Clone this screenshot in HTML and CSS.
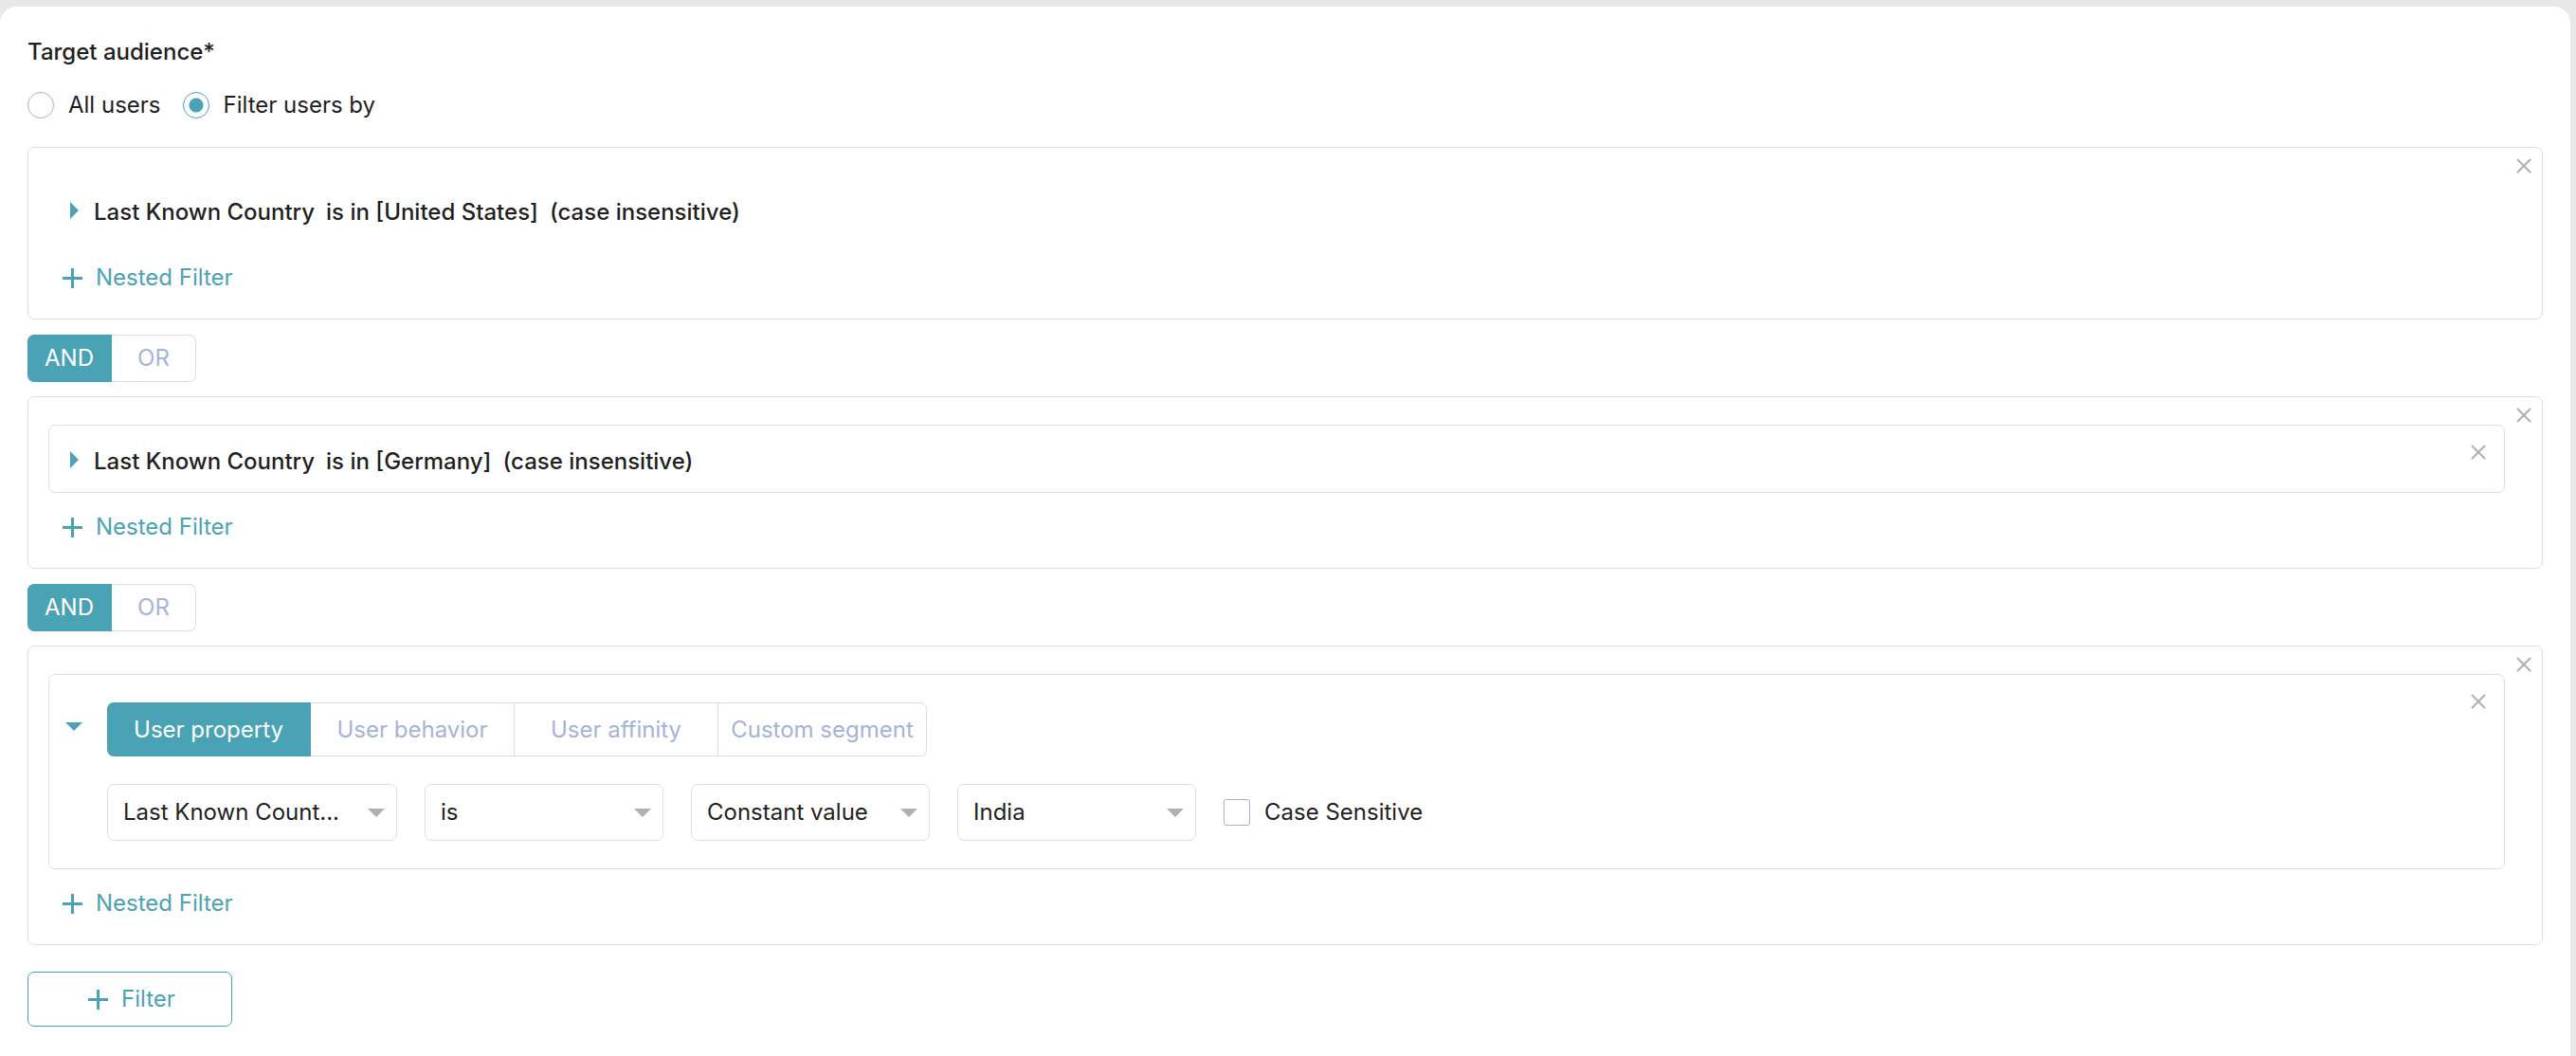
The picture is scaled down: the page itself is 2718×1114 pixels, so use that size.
FILE: index.html
```html
<!DOCTYPE html>
<html lang="en">
<head>
<meta charset="utf-8">
<title>Target audience</title>
<link rel="stylesheet" href="styles.css">
</head>
<body>
<svg class="sprite" aria-hidden="true">
  <symbol id="plus" viewBox="0 0 21 21"><path d="M10.5 0V21M0 10.5H21" stroke="currentColor" stroke-width="3"/></symbol>
  <symbol id="cross" viewBox="0 0 16 16"><path d="M1.5 1.5L14.5 14.5M14.5 1.5L1.5 14.5" stroke="currentColor" stroke-width="2" stroke-linecap="round"/></symbol>
  <symbol id="caret-right" viewBox="0 0 9 18"><path d="M0 0L9 9L0 18Z" fill="currentColor"/></symbol>
  <symbol id="caret-down" viewBox="0 0 18 9"><path d="M0 0H18L9 9Z" fill="currentColor"/></symbol>
</svg>
<main class="card">
  <h1 class="title">Target audience*</h1>
  <div class="radios">
    <label class="choice"><input class="radio" type="radio" name="audience"><span>All users</span></label>
    <label class="choice"><input class="radio" type="radio" name="audience" checked><span>Filter users by</span></label>
  </div>

  <section class="group">
    <div class="group-body">
      <div class="rule rule-plain">
        <button class="summary" type="button">
          <svg class="caret-right"><use href="#caret-right"/></svg>
          <span>Last Known Country</span><span>is in [United States]</span><span>(case insensitive)</span>
        </button>
      </div>
      <button class="nested" type="button"><svg class="plus"><use href="#plus"/></svg>Nested Filter</button>
    </div>
    <button class="close" type="button" aria-label="Remove group"><svg class="cross"><use href="#cross"/></svg></button>
  </section>

  <div class="toggle">
    <button class="segment selected" type="button">AND</button>
    <button class="segment" type="button">OR</button>
  </div>

  <section class="group">
    <div class="group-body">
      <div class="rule">
        <button class="summary" type="button">
          <svg class="caret-right"><use href="#caret-right"/></svg>
          <span>Last Known Country</span><span>is in [Germany]</span><span>(case insensitive)</span>
        </button>
        <button class="close close-rule" type="button" aria-label="Remove filter"><svg class="cross"><use href="#cross"/></svg></button>
      </div>
      <button class="nested" type="button"><svg class="plus"><use href="#plus"/></svg>Nested Filter</button>
    </div>
    <button class="close" type="button" aria-label="Remove group"><svg class="cross"><use href="#cross"/></svg></button>
  </section>

  <div class="toggle">
    <button class="segment selected" type="button">AND</button>
    <button class="segment" type="button">OR</button>
  </div>

  <section class="group">
    <div class="group-body">
      <div class="rule">
        <button class="collapse" type="button" aria-label="Collapse filter"><svg class="caret-down"><use href="#caret-down"/></svg></button>
        <div class="editor">
          <div class="tabs">
            <button class="segment selected" type="button">User property</button>
            <button class="segment" type="button">User behavior</button>
            <button class="segment" type="button">User affinity</button>
            <button class="segment" type="button">Custom segment</button>
          </div>
          <div class="fields">
            <span class="field field-wide"><select aria-label="Property"><option>Last Known Count...</option></select><svg class="caret-down"><use href="#caret-down"/></svg></span>
            <span class="field"><select aria-label="Operator"><option>is</option></select><svg class="caret-down"><use href="#caret-down"/></svg></span>
            <span class="field"><select aria-label="Value type"><option>Constant value</option></select><svg class="caret-down"><use href="#caret-down"/></svg></span>
            <span class="field"><select aria-label="Value"><option>India</option></select><svg class="caret-down"><use href="#caret-down"/></svg></span>
            <label class="choice"><input class="checkbox" type="checkbox"><span>Case Sensitive</span></label>
          </div>
        </div>
        <button class="close close-rule" type="button" aria-label="Remove filter"><svg class="cross"><use href="#cross"/></svg></button>
      </div>
      <button class="nested" type="button"><svg class="plus"><use href="#plus"/></svg>Nested Filter</button>
    </div>
    <button class="close" type="button" aria-label="Remove group"><svg class="cross"><use href="#cross"/></svg></button>
  </section>

  <button class="add" type="button"><svg class="plus"><use href="#plus"/></svg>Filter</button>
</main>
</body>
</html>
```
FILE: styles.css
```css
:root {
  --teal: #4aa3b5;
  --line: #d9deec;
  --muted: #a5b3d6;
  --ink: #1f1f1f;
}
* { box-sizing: border-box; }
body {
  margin: 0;
  padding: 6px 5px 0 0;
  background: #e8e8e8;
  color: var(--ink);
  font: 400 24px/32px Inter, sans-serif;
}
button, select {
  margin: 0;
  padding: 0;
  border: 0;
  background: none;
  color: inherit;
  font: inherit;
  text-align: left;
}
svg { display: block; flex: none; }
.sprite { display: none; }
.card {
  min-height: calc(100vh - 6px);
  padding: 32px 29px 30px 29px;
  border: 1px solid #e6e8f2;
  border-width: 1px 1px 0 0;
  border-radius: 18px 18px 0 0;
  background: #fff;
}
.title { margin: 0; font-size: 24px; line-height: 32px; font-weight: 500; }
.radios { display: flex; gap: 23px; margin: 24px 0 28px; }
.choice { display: flex; align-items: center; gap: 15px; }
.radio, .checkbox {
  appearance: none;
  width: 28px;
  height: 28px;
  margin: 0;
  border: 1px solid var(--muted);
  background: #fff;
}
.radio { border-radius: 50%; }
.radio:checked {
  border-color: var(--teal);
  background: radial-gradient(circle, var(--teal) 7px, #fff 8px);
}
.checkbox { border-radius: 3px; }
.group {
  display: flex;
  align-items: flex-start;
  border: 1px solid var(--line);
  border-radius: 7px;
}
.group-body { flex: 1; padding: 29px 0 0 21px; }
.close {
  display: grid;
  place-items: center;
  width: 39px;
  height: 38px;
  color: #b0b0b0;
}
.close-rule { width: 54px; height: 56px; margin-left: auto; }
.cross { width: 16px; height: 16px; }
.rule {
  display: flex;
  align-items: flex-start;
  min-height: 72px;
  border: 1px solid var(--line);
  border-radius: 7px;
}
.rule-plain { border-color: transparent; }
.summary {
  display: flex;
  align-items: center;
  gap: 12px;
  padding: 22px 0 16px 22px;
  font-weight: 500;
}
.caret-right { width: 9px; height: 18px; margin: 0 4px 4px 0; color: var(--teal); }
.caret-down { width: 18px; height: 9px; }
.nested {
  display: flex;
  align-items: center;
  gap: 14px;
  height: 32px;
  margin: 20px 0 27px 15px;
  color: var(--teal);
}
.plus { width: 21px; height: 21px; }
.toggle, .tabs { display: flex; width: fit-content; }
.toggle { margin: 16px 0 15px; }
.segment {
  flex: none;
  height: 50px;
  border: 1px solid var(--line);
  border-left-width: 0;
  color: var(--muted);
  text-align: center;
}
.toggle .segment { width: 89px; }
.tabs .segment { width: 215px; height: 57px; }
.tabs .segment:last-child { width: 220px; }
.segment:first-child { border-radius: 7px 0 0 7px; }
.segment:last-child { border-radius: 0 7px 7px 0; }
.segment.selected { border-color: var(--teal); background: var(--teal); color: #fff; }
.collapse { margin: 50px 26px 0 17px; color: var(--teal); }
.editor { padding: 29px 0; }
.fields { display: flex; align-items: center; gap: 29px; margin-top: 29px; }
.field { display: grid; align-items: center; width: 252px; color: #b0b0b0; }
.field-wide { width: 306px; }
.field > * { grid-area: 1 / 1; }
.field svg { justify-self: end; margin-right: 13px; pointer-events: none; }
.field select {
  appearance: none;
  height: 60px;
  padding: 0 40px 0 16px;
  border: 1px solid var(--line);
  border-radius: 7px;
  background: #fff;
  color: var(--ink);
}
.add {
  display: flex;
  align-items: center;
  justify-content: center;
  gap: 14px;
  width: 216px;
  height: 58px;
  margin-top: 28px;
  padding-left: 4px;
  border: 1px solid var(--teal);
  border-radius: 7px;
  color: var(--teal);
}
```
